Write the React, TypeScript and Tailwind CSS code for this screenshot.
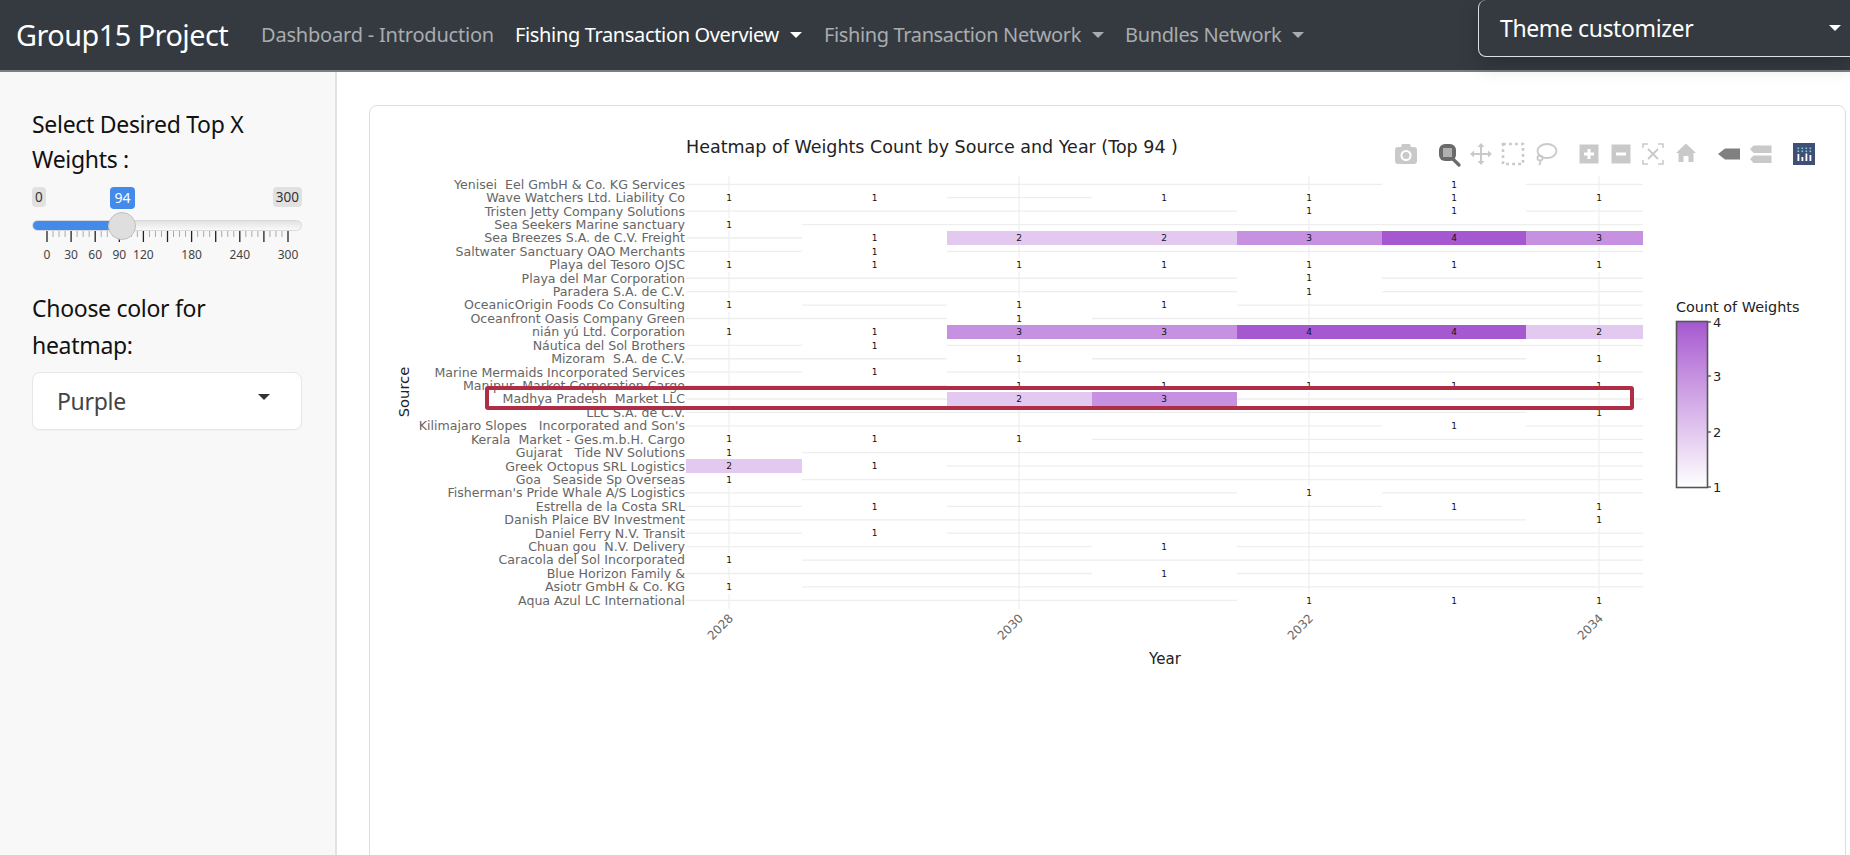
import React from "react";

const ui = "font-['Noto_Sans',sans-serif]";
const edges = [686, 802, 946.5, 1091.5, 1237, 1382, 1526, 1643];
const centers = [729, 874.5, 1019, 1164, 1309, 1454, 1599];
const rowY = (i: number) => 184.3 + i * 13.42;
const colors: Record<number, string> = { 1: "#ffffff", 2: "#e3c9ef", 3: "#c691e0", 4: "#a558cf" };

const rows: [string, (number | null)[]][] = [
  ["Yenisei\u00a0 Eel GmbH & Co. KG Services", [null, null, null, null, null, 1, null]],
  ["Wave Watchers Ltd. Liability Co", [1, 1, null, 1, 1, 1, 1]],
  ["Tristen Jetty Company Solutions", [null, null, null, null, 1, 1, null]],
  ["Sea Seekers Marine sanctuary", [1, null, null, null, null, null, null]],
  ["Sea Breezes S.A. de C.V. Freight", [null, 1, 2, 2, 3, 4, 3]],
  ["Saltwater Sanctuary OAO Merchants", [null, 1, null, null, null, null, null]],
  ["Playa del Tesoro OJSC", [1, 1, 1, 1, 1, 1, 1]],
  ["Playa del Mar Corporation", [null, null, null, null, 1, null, null]],
  ["Paradera S.A. de C.V.", [null, null, null, null, 1, null, null]],
  ["OceanicOrigin Foods Co Consulting", [1, null, 1, 1, null, null, null]],
  ["Oceanfront Oasis Company Green", [null, null, 1, null, null, null, null]],
  ["nián yú Ltd. Corporation", [1, 1, 3, 3, 4, 4, 2]],
  ["Náutica del Sol Brothers", [null, 1, null, null, null, null, null]],
  ["Mizoram\u00a0 S.A. de C.V.", [null, null, 1, null, null, null, 1]],
  ["Marine Mermaids Incorporated Services", [null, 1, null, null, null, null, null]],
  ["Manipur\u00a0 Market Corporation Cargo", [null, null, 1, 1, 1, 1, 1]],
  ["Madhya Pradesh\u00a0 Market LLC", [null, null, 2, 3, null, null, null]],
  ["LLC S.A. de C.V.", [null, null, null, null, null, null, 1]],
  ["Kilimajaro Slopes\u00a0 \u00a0Incorporated and Son's", [null, null, null, null, null, 1, null]],
  ["Kerala\u00a0 Market - Ges.m.b.H. Cargo", [1, 1, 1, null, null, null, null]],
  ["Gujarat\u00a0 \u00a0Tide NV Solutions", [1, null, null, null, null, null, null]],
  ["Greek Octopus SRL Logistics", [2, 1, null, null, null, null, null]],
  ["Goa\u00a0 \u00a0Seaside Sp Overseas", [1, null, null, null, null, null, null]],
  ["Fisherman's Pride Whale A/S Logistics", [null, null, null, null, 1, null, null]],
  ["Estrella de la Costa SRL", [null, 1, null, null, null, 1, 1]],
  ["Danish Plaice BV Investment", [null, null, null, null, null, null, 1]],
  ["Daniel Ferry N.V. Transit", [null, 1, null, null, null, null, null]],
  ["Chuan gou\u00a0 N.V. Delivery", [null, null, null, 1, null, null, null]],
  ["Caracola del Sol Incorporated", [1, null, null, null, null, null, null]],
  ["Blue Horizon Family &", [null, null, null, 1, null, null, null]],
  ["Asiotr GmbH & Co. KG", [1, null, null, null, null, null, null]],
  ["Aqua Azul LC International", [null, null, null, null, 1, 1, 1]],
];

function Caret({ className }: { className: string }) {
  return <span className={`inline-block shrink-0 w-0 h-0 border-x-[6px] border-x-transparent border-t-[6px] ${className}`} />;
}

function NavLink({ label, active, menu, width, tracking }: { label: string; active?: boolean; menu?: boolean; width: string; tracking: string }) {
  const color = active ? "text-white" : "text-[#a9acaf]";
  return (
    <div className={`flex items-center ${width} ${color} text-[20px] shrink-0`}>
      <span className={`${tracking} whitespace-nowrap`}>{label}</span>
      {menu && <Caret className={`ml-[11px] ${active ? "border-t-white" : "border-t-[#a9acaf]"}`} />}
    </div>
  );
}

const L = "#c9c9c9";

function Toolbar() {
  return (
    <g>
      {/* camera */}
      <g transform="translate(1406 154)">
        <path d="M-11 -4a3 3 0 0 1 3-3h3l1-3h8l1 3h3a3 3 0 0 1 3 3v11a3 3 0 0 1-3 3h-16a3 3 0 0 1-3-3z" fill={L} />
        <circle r="5.5" cy="1.5" fill="#fff" />
        <circle r="3.5" cy="1.5" fill={L} />
      </g>
      {/* zoom */}
      <g transform="translate(1448 154)">
        <rect x="-9" y="-10" width="17" height="17" rx="6" fill="#6a6a6a" />
        <rect x="-5" y="-6" width="9" height="9" fill="#b0b0b0" />
        <path d="M5 5l6 6" stroke="#6a6a6a" strokeWidth="3.2" strokeLinecap="round" />
      </g>
      {/* pan */}
      <g transform="translate(1481 154)" fill={L}>
        <path d="M-1 -8h2v16h-2zM-8 -1h16v2h-16z" />
        <path d="M0 -11l3.5 4h-7zM0 11l3.5-4h-7zM-11 0l4-3.5v7zM11 0l-4-3.5v7z" />
      </g>
      {/* box select */}
      <rect x="1503" y="144" width="20" height="20" fill="none" stroke={L} strokeWidth="2.6" strokeDasharray="2.8 3.2" />
      {/* lasso */}
      <g transform="translate(1546 153)" fill="none" stroke={L} strokeWidth="1.8">
        <ellipse cx="1" cy="-2" rx="9.5" ry="7" />
        <ellipse cx="-6" cy="5" rx="2.6" ry="2.4" />
        <path d="M-6 7q1 3 -1 5" />
      </g>
      {/* zoom in/out */}
      <rect x="1579.5" y="144.5" width="19" height="19" fill={L} />
      <path d="M1587.5 149h3v3.5h3.5v3h-3.5v3.5h-3v-3.5h-3.5v-3h3.5z" fill="#fff" />
      <rect x="1611.5" y="144.5" width="19" height="19" fill={L} />
      <rect x="1616" y="152.5" width="10" height="3" fill="#fff" />
      {/* autoscale */}
      <g transform="translate(1653 154)" fill="none" stroke={L} strokeWidth="1.5">
        <path d="M-10 -6v-4h5M5 -10h5v4M10 6v4h-5M-5 10h-5v-4" />
        <path d="M-5 -5l10 10M5 -5l-10 10" strokeWidth="1.8" />
      </g>
      {/* home */}
      <path d="M1686 143.5l10 9.5h-2.5v9h-5v-6h-5v6h-5v-9h-2.5z" fill={L} />
      {/* hover closest */}
      <path d="M1718 154l7-5.5h15v11h-15z" fill="#808080" />
      {/* hover compare */}
      <path d="M1750 149l3.5-3.5h18v7.5h-18zM1750 159l3.5-3.5h18v7.5h-18z" fill={L} />
      {/* logo */}
      <g transform="translate(1793 143)">
        <rect width="22" height="22" fill="#3f4f75" />
        {[4.5, 8.5, 12.5, 16.5].flatMap((x) => [4.5, 7.5].map((y) => <rect key={`${x}-${y}`} x={x} y={y} width="1.6" height="1.6" fill="#7fd0d8" />))}
        <rect x="4.5" y="11" width="1.8" height="7" fill="#fff" />
        <rect x="8.5" y="14" width="1.8" height="4" fill="#fff" />
        <rect x="12.5" y="10.5" width="1.8" height="7.5" fill="#fff" />
        <rect x="16.5" y="12" width="1.8" height="6" fill="#fff" />
      </g>
    </g>
  );
}

function Chart() {
  return (
    <svg viewBox="370 106 1475 780" width="1475" height="780" className="block" style={{ fontFamily: "'DejaVu Sans', sans-serif" }}>
      <defs>
        <linearGradient id="cbar" x1="0" y1="0" x2="0" y2="1">
          <stop offset="0" stopColor="#a558cf" />
          <stop offset="0.33" stopColor="#c691e0" />
          <stop offset="0.67" stopColor="#e3c9ef" />
          <stop offset="1" stopColor="#ffffff" />
        </linearGradient>
      </defs>
      <text x="686" y="153" fontSize="17.5" fill="#222">Heatmap of Weights Count by Source and Year (Top 94 )</text>
      <Toolbar />

      {[729, 1019, 1309, 1599].map((x) => (
        <line key={x} x1={x} x2={x} y1="176" y2="609" stroke="#eeeeee" strokeWidth="1.2" />
      ))}
      {rows.map((_, i) => (
        <line key={i} x1="686" x2="1643" y1={rowY(i)} y2={rowY(i)} stroke="#eeeeee" strokeWidth="1.3" />
      ))}
      {rows.map(([, vals], i) =>
        vals.map((v, c) =>
          v === null ? null : (
            <rect key={`${i}-${c}`} x={edges[c]} y={rowY(i) - 6.71} width={edges[c + 1] - edges[c]} height="13.42" fill={colors[v]} shapeRendering="crispEdges" />
          )
        )
      )}
      {rows.map(([, vals], i) =>
        vals.map((v, c) =>
          v === null ? null : (
            <text key={`t${i}-${c}`} x={centers[c]} y={rowY(i) + 3.2} fontSize="9" fill="#111" textAnchor="middle">{v}</text>
          )
        )
      )}
      {rows.map(([name], i) => (
        <text key={`n${i}`} x="685" y={rowY(i) + 4.4} fontSize="12.6" fill="#666" textAnchor="end">{name}</text>
      ))}

      <text transform="translate(409 392) rotate(-90)" fontSize="14.7" fill="#222" textAnchor="middle">Source</text>
      <text x="1165" y="664" fontSize="15" fill="#222" textAnchor="middle">Year</text>
      {[[729, "2028"], [1019, "2030"], [1309, "2032"], [1599, "2034"]].map(([x, t]) => (
        <text key={t as string} transform={`translate(${(x as number) + 5} 619) rotate(-45)`} fontSize="12" fill="#666" textAnchor="end">{t}</text>
      ))}

      <text x="1676" y="312" fontSize="14.4" fill="#222">Count of Weights</text>
      <rect x="1676.5" y="321.5" width="31" height="166" fill="url(#cbar)" stroke="#555" strokeWidth="1.6" />
      {[[322, "4"], [376, "3"], [432, "2"], [487, "1"]].map(([y, t]) => (
        <g key={t as string}>
          <line x1="1708" x2="1711" y1={y as number} y2={y as number} stroke="#444" strokeWidth="1.2" />
          <text x="1713" y={(y as number) + 5} fontSize="13" fill="#222">{t}</text>
        </g>
      ))}

      <rect x="487" y="388" width="1145" height="20" rx="1" fill="none" stroke="#ae2e46" strokeWidth="4" />
    </svg>
  );
}

function SliderScale() {
  const marks = [0, 30, 60, 90, 120, 150, 180, 210, 240, 270, 300];
  const x = (v: number) => 15 + (v / 300) * 241;
  const ticks: number[] = [];
  for (let v = 0; v <= 300; v += 7.5) ticks.push(v);
  return (
    <svg width="270" height="36" className="block" style={{ fontFamily: "'Noto Sans', sans-serif" }}>
      {ticks.map((v) => {
        const major = v % 30 === 0;
        return (
          <line key={v} x1={x(v)} x2={x(v)} y1="0" y2={major ? 11 : 6} stroke={major ? "#222" : "#aaa"} strokeWidth={major ? 1.3 : 1} />
        );
      })}
      {marks.filter((m) => ![150, 210, 270].includes(m)).map((m) => (
        <text key={m} x={x(m)} y="28" fontSize="12" fill="#444" textAnchor="middle">{m}</text>
      ))}
    </svg>
  );
}

export default function App() {
  return (
    <div className={`w-[1850px] h-[855px] overflow-hidden bg-white flex flex-col ${ui}`}>
      <header className="relative h-[72px] shrink-0 bg-[#343a40] border-b-[2px] border-[#7b7f83] flex items-center pl-4">
        <div className="w-[245px] shrink-0 text-white text-[28.8px] tracking-[-0.5px] whitespace-nowrap">Group15 Project</div>
        <NavLink label="Dashboard - Introduction" width="w-[254px]" tracking="tracking-[-0.2px]" />
        <NavLink label="Fishing Transaction Overview" active menu width="w-[309px]" tracking="tracking-[-0.35px]" />
        <NavLink label="Fishing Transaction Network" menu width="w-[301px]" tracking="tracking-[-0.37px]" />
        <NavLink label="Bundles Network" menu width="w-[190px]" tracking="tracking-[-0.35px]" />
        <div className="absolute right-0 top-0 w-[372px] h-[57px] rounded-bl-lg rounded-tl-lg border-l border-b border-[#dfe0e1] bg-[#343a40] shadow-[0_8px_20px_rgba(0,0,0,0.18)] flex items-center justify-between pl-[21px] pr-[9px]">
          <span className="text-white text-[23px] tracking-[-0.4px]">Theme customizer</span>
          <Caret className="border-t-white" />
        </div>
      </header>
      <div className="flex-1 min-h-0 flex">
        <aside className="w-[337px] shrink-0 bg-[#f8f8f8] border-r-[2px] border-[#e3e3e3] pl-8 pt-[35px]">
          <div className="w-[270px] text-[23px] leading-[35px] text-[#111] tracking-[-0.3px]">Select Desired Top X Weights :</div>
          <div className="relative w-[270px] mt-[10px]">
            <div className="flex justify-between items-start h-[33px]">
              <span className="h-5 px-[3px] rounded bg-[#e1e1e1] text-[#333] text-[13.5px] leading-5">0</span>
              <span className="h-5 px-[3px] rounded bg-[#e1e1e1] text-[#333] text-[13.5px] leading-5">300</span>
            </div>
            <span className="absolute left-[78px] top-0 w-[25px] h-[22px] rounded bg-[#428bea] text-white text-[14px] leading-[22px] text-center">94</span>
            <div className="h-[11px] rounded-full border border-[#d9d9d9] bg-gradient-to-b from-[#e2e2e2] to-[#fafafa] overflow-hidden">
              <div className="h-full w-[85px] bg-[#428bea]" />
            </div>
            <div className="absolute left-[76px] top-[25px] w-[28px] h-[28px] rounded-full bg-[#dedede] border border-[#c0c0c0]" />
            <SliderScale />
          </div>
          <div className="w-[270px] mt-[23px] text-[23px] leading-[37px] text-[#111] tracking-[-0.3px]">Choose color for heatmap:</div>
          <div className="w-[270px] h-[58px] mt-[8px] bg-white border border-[#e6e6e6] rounded-lg flex items-center justify-between pl-[24px] pr-[31px] shadow-[0_1px_1px_rgba(0,0,0,0.03)]">
            <span className="text-[23px] text-[#444] tracking-[-0.3px]">Purple</span>
            <Caret className="border-t-[#333] -mt-2" />
          </div>
        </aside>
        <main className="flex-1 min-w-0 pl-8 pr-1 pt-[33px]">
          <div className="h-[800px] rounded-lg border border-[#dedede] bg-white overflow-hidden">
            <Chart />
          </div>
        </main>
      </div>
    </div>
  );
}
